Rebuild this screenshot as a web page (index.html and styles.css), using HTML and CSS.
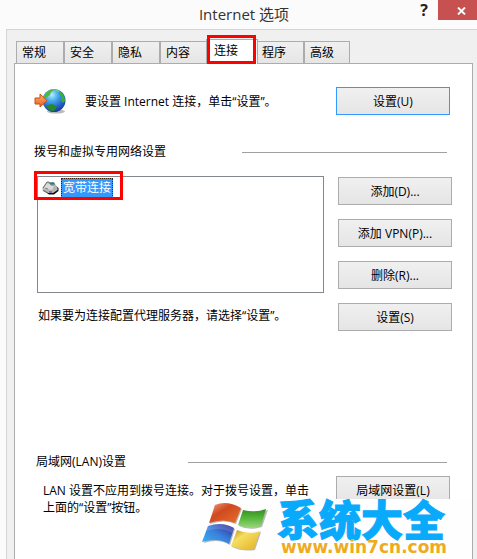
FILE: index.html
```html
<!DOCTYPE html>
<html lang="zh-CN">
<head>
  <meta charset="UTF-8" />
  <meta name="viewport" content="width=device-width, initial-scale=1.0" />
  <title>Internet 选项</title>
  <link rel="stylesheet" href="styles.css">
</head>
<body>
  <header class="titlebar">
    <h1>Internet 选项</h1>
    <div class="window-buttons">
      <button class="help" type="button">?</button>
      <button class="close" type="button" aria-label="关闭">
        <svg width="9" height="8" viewBox="0 0 9 8"><path d="M1 0.5 L8 7.5 M8 0.5 L1 7.5" stroke="#fff" stroke-width="1.9" /></svg>
      </button>
    </div>
  </header>

  <main class="dialog">
    <div class="tabs" role="tablist">
      <button class="tab" role="tab" type="button">常规</button>
      <button class="tab" role="tab" type="button">安全</button>
      <button class="tab" role="tab" type="button">隐私</button>
      <button class="tab" role="tab" type="button">内容</button>
      <button class="tab active" role="tab" type="button" aria-selected="true">连接</button>
      <button class="tab" role="tab" type="button">程序</button>
      <button class="tab" role="tab" type="button">高级</button>
    </div>

    <div class="panel" role="tabpanel">
      <div class="setup">
        <svg class="globe" width="32" height="26" viewBox="0 0 32 26">
          <defs>
            <radialGradient id="sea" cx="0.4" cy="0.25" r="0.8">
              <stop offset="0" stop-color="#b5f0fc" />
              <stop offset="0.35" stop-color="#45a9ec" />
              <stop offset="0.75" stop-color="#2259c4" />
              <stop offset="1" stop-color="#17348c" />
            </radialGradient>
            <linearGradient id="arrow" x1="0" y1="0" x2="0" y2="1">
              <stop offset="0" stop-color="#ffb070" />
              <stop offset="1" stop-color="#e5601c" />
            </linearGradient>
          </defs>
          <ellipse cx="22" cy="23.5" rx="9" ry="2" fill="#b9bdb9" />
          <circle cx="20" cy="12.5" r="11.5" fill="url(#sea)" />
          <path d="M10 8 Q12 3 18 1.2 L20 2 L17 4 L16 7 L12 10 L10 12 Z" fill="#54b544" />
          <path d="M26 3 Q31 8 31 13 L29 15 L27 12 L28 9 L25 6 Z" fill="#3fae36" />
          <path d="M14 17 L18 16 L23 18.5 L21 22 L19 23.5 Q14 22 12 18 Z" fill="#258a2c" />
          <path d="M21 1.5 L26 3 L24 4 Z" fill="#7ed060" />
          <path d="M1 10 H6 V6 L13 12.5 L6 19 V16 H1 Z" fill="url(#arrow)" stroke="#c94d18" />
        </svg>
        <p>要设置 Internet 连接，单击“设置”。</p>
        <button class="btn focused" type="button">设置(U)</button>
      </div>

      <h2 class="group dialup"><span>拨号和虚拟专用网络设置</span></h2>
      <div class="connections">
        <div class="list-side">
          <ul class="listbox" role="listbox" aria-label="拨号和虚拟专用网络设置">
            <li role="option" aria-selected="true">
              <svg width="17" height="14" viewBox="0 0 17 14">
                <path d="M2 10 L7 13.5 H12 L16.5 10 V7 L14 5 Z" fill="#111" />
                <path d="M0.5 7 L5 1 H12 L15.5 7 V9 L11 12 H6 L0.5 9.5 Z" fill="#b4b4b4" />
                <path d="M1 7 L5 2 L12 5 L10 9 Z" fill="#dadada" />
                <path d="M7 1.5 H12 L13 3.5 H9 Z" fill="#0c8a8c" />
                <path d="M5 1 H7 L9 4 H12" fill="none" stroke="#777" />
                <path d="M1 7 L5 1 M1 9.5 L6 12" fill="none" stroke="#666" />
                <path d="M3 7 L6 8" stroke="#888" />
                <path d="M7 11 H10" stroke="#3232c8" />
              </svg>
              <span>宽带连接</span>
            </li>
          </ul>
          <p>如果要为连接配置代理服务器，请选择“设置”。</p>
        </div>
        <div class="button-side">
          <button class="btn" type="button">添加(D)...</button>
          <button class="btn" type="button">添加 VPN(P)...</button>
          <button class="btn" type="button">删除(R)...</button>
          <button class="btn" type="button">设置(S)</button>
        </div>
      </div>

      <h2 class="group lan-title"><span>局域网(LAN)设置</span></h2>
      <div class="lan">
        <p>LAN 设置不应用到拨号连接。对于拨号设置，单击上面的“设置”按钮。</p>
        <button class="btn" type="button">局域网设置(L)</button>
      </div>

      <div class="watermark">
        <svg width="68" height="52" viewBox="0 0 68 52">
          <defs>
            <linearGradient id="red" x1="0" y1="0" x2="1" y2="1">
              <stop offset="0" stop-color="#f0a080" />
              <stop offset="0.4" stop-color="#cf4a20" />
              <stop offset="1" stop-color="#e8702c" />
            </linearGradient>
            <linearGradient id="green" x1="0" y1="0" x2="0" y2="1">
              <stop offset="0" stop-color="#318c22" />
              <stop offset="0.5" stop-color="#58b83c" />
              <stop offset="1" stop-color="#9ad67c" />
            </linearGradient>
            <linearGradient id="blue" x1="0" y1="1" x2="1" y2="0">
              <stop offset="0" stop-color="#35b5f2" />
              <stop offset="0.5" stop-color="#3a80dc" />
              <stop offset="1" stop-color="#32228e" />
            </linearGradient>
            <linearGradient id="yellow" x1="0" y1="0" x2="1" y2="1">
              <stop offset="0" stop-color="#b98a18" />
              <stop offset="0.35" stop-color="#f6de60" />
              <stop offset="1" stop-color="#e3ae24" />
            </linearGradient>
          </defs>
          <g fill="#777" opacity="0.5">
            <path d="M15 4 Q26 -1 41 7 L35 22 Q24 17 9 22 Z" />
            <path d="M43 9 Q55 12 67 8 L61 25 Q48 29 38 24 Z" />
            <path d="M9 25 Q22 20 34 27 L29 43 Q18 36 3 41 Z" />
            <path d="M37 29 Q49 34 60 30 L54 48 Q42 50 31 45 Z" />
          </g>
          <path d="M14 3 Q26 -2 40 6 L34 21 Q22 16 8 21 Z" fill="url(#red)" />
          <path d="M42 8 Q54 11 65 7 L60 24 Q48 28 37 23 Z" fill="url(#green)" />
          <path d="M7 24 Q21 19 33 26 L28 42 Q17 35 1 40 Z" fill="url(#blue)" />
          <path d="M36 28 Q48 33 59 29 L53 47 Q42 49 30 44 Z" fill="url(#yellow)" />
          <path d="M7 24 Q21 19 33 26 L31 31 Q20 24 5 29 Z" fill="#fff" opacity="0.15" />
        </svg>
        <div class="brand">
          <strong>系统大全</strong>
          <a href="#">www.win7cn.com</a>
        </div>
      </div>
    </div>
  </main>
</body>
</html>
```

FILE: styles.css
```css
*, *::after {
  box-sizing: border-box;
}
body {
  margin: 0;
  min-height: 100vh;
  display: flex;
  flex-direction: column;
  background: #fbfbfb;
  color: #000;
  font-family: "Open Sans", "Noto Sans CJK SC", sans-serif;
  font-size: 12px;
  line-height: 17px;
}
h1, h2, p, ul {
  margin: 0;
  padding: 0;
  font-weight: normal;
}
button {
  font: inherit;
  color: inherit;
  padding: 0;
}

/* title bar */
.titlebar {
  display: grid;
  grid-template-columns: 1fr auto 1fr;
  height: 29px;
  padding-left: 11px;
}
.titlebar h1 {
  grid-column: 2;
  font-size: 15px;
  line-height: 29px;
  color: #333;
}
.window-buttons {
  display: flex;
  justify-content: flex-end;
  align-items: flex-start;
}
.window-buttons button {
  border: none;
  height: 20px;
}
.help {
  width: 28px;
  background: none;
  font-size: 16px;
  font-weight: bold;
  color: #222;
}
.close {
  width: 39px;
  padding-left: 7px;
  background: #c75050;
}

/* dialog and tabs */
.dialog {
  flex: 1;
  display: flex;
  flex-direction: column;
  margin-left: 6px;
  padding: 9px 4px 0 7px;
  background: #f0f0f0;
  border-left: 1px solid #d5d5d5;
  border-top: 1px solid #d5d5d5;
}
.tabs {
  display: flex;
  align-items: flex-end;
  padding-left: 2px;
}
.tab {
  width: 48px;
  height: 22px;
  padding-left: 5px;
  text-align: left;
  background: linear-gradient(#f0f0f0, #e5e5e5);
  border: 1px solid #acacac;
  border-bottom: none;
}
.tab:last-child {
  width: 46px;
}
.tab.active {
  position: relative;
  z-index: 1;
  width: 52px;
  height: 25px;
  margin: 0 -2px -1px;
  padding: 0 0 3px 7px;
  background: #fff;
}
.tab.active::after {
  content: "";
  position: absolute;
  inset: -5px 1px 0 0;
  border: 3px solid #f00;
}
.panel {
  flex: 1;
  position: relative;
  padding: 23px 20px 43px 19px;
  background: #fff;
  border: 1px solid #acacac;
  border-bottom: none;
}

/* buttons */
.btn {
  flex: none;
  width: 114px;
  height: 28px;
  background: linear-gradient(#f0f0f0, #e5e5e5);
  border: 1px solid #acacac;
}
.btn.focused {
  border-color: #3399ff;
}

.setup {
  display: flex;
  align-items: center;
  padding-right: 2px;
}
.setup p {
  flex: 1;
  padding-left: 19px;
}

/* group titles with a rule to the right */
.group {
  display: flex;
  align-items: center;
  font-size: 12px;
  line-height: 18px;
  padding-right: 5px;
}
.group::after {
  content: "";
  flex: 1;
  border-top: 1px solid #a0a0a0;
}
.dialup {
  margin: 28px 0 15px;
}
.dialup::after {
  margin-left: 76px;
}
.lan-title {
  margin: 122px 0 5px;
  padding-left: 2px;
}
.lan-title::after {
  margin-left: 62px;
}

.connections {
  display: flex;
  gap: 14px;
  padding-left: 3px;
}
.list-side {
  flex: 1;
}
.list-side p {
  padding: 14px 0 0 1px;
}
.listbox {
  position: relative;
  height: 117px;
  padding: 1px 4px;
  list-style: none;
  border: 1px solid #828790;
}
.listbox li {
  display: flex;
  align-items: center;
  gap: 2px;
}
.listbox li span {
  padding: 0 1px;
  line-height: 18px;
  color: #fff;
  background: #3399ff;
  border: 1px dotted #402000;
}
.listbox li::after {
  content: "";
  position: absolute;
  top: -6px;
  left: -4px;
  width: 89px;
  height: 29px;
  border: 3px solid #f00;
}
.button-side {
  display: flex;
  flex-direction: column;
  gap: 14px;
  padding-top: 1px;
}

.lan {
  display: flex;
  justify-content: space-between;
  gap: 20px;
  padding: 0 2px 0 9px;
}
.lan p {
  padding-top: 6px;
}

/* site mark over the bottom corner */
.watermark {
  position: absolute;
  right: 2px;
  bottom: 0;
  display: flex;
  gap: 8px;
  width: 270px;
  height: 60px;
  padding: 3px 0 0 1px;
  background: #fefefe;
}
.brand {
  display: flex;
  flex-direction: column;
}
.brand strong {
  font-size: 42px;
  font-weight: 900;
  line-height: 36px;
  color: #09a9fb;
  -webkit-text-stroke: 1px #09a9fb;
}
.brand a {
  padding-left: 4px;
  font: bold 17px/18px "DejaVu Sans", sans-serif;
  color: #efab20;
  text-decoration: none;
}
```
